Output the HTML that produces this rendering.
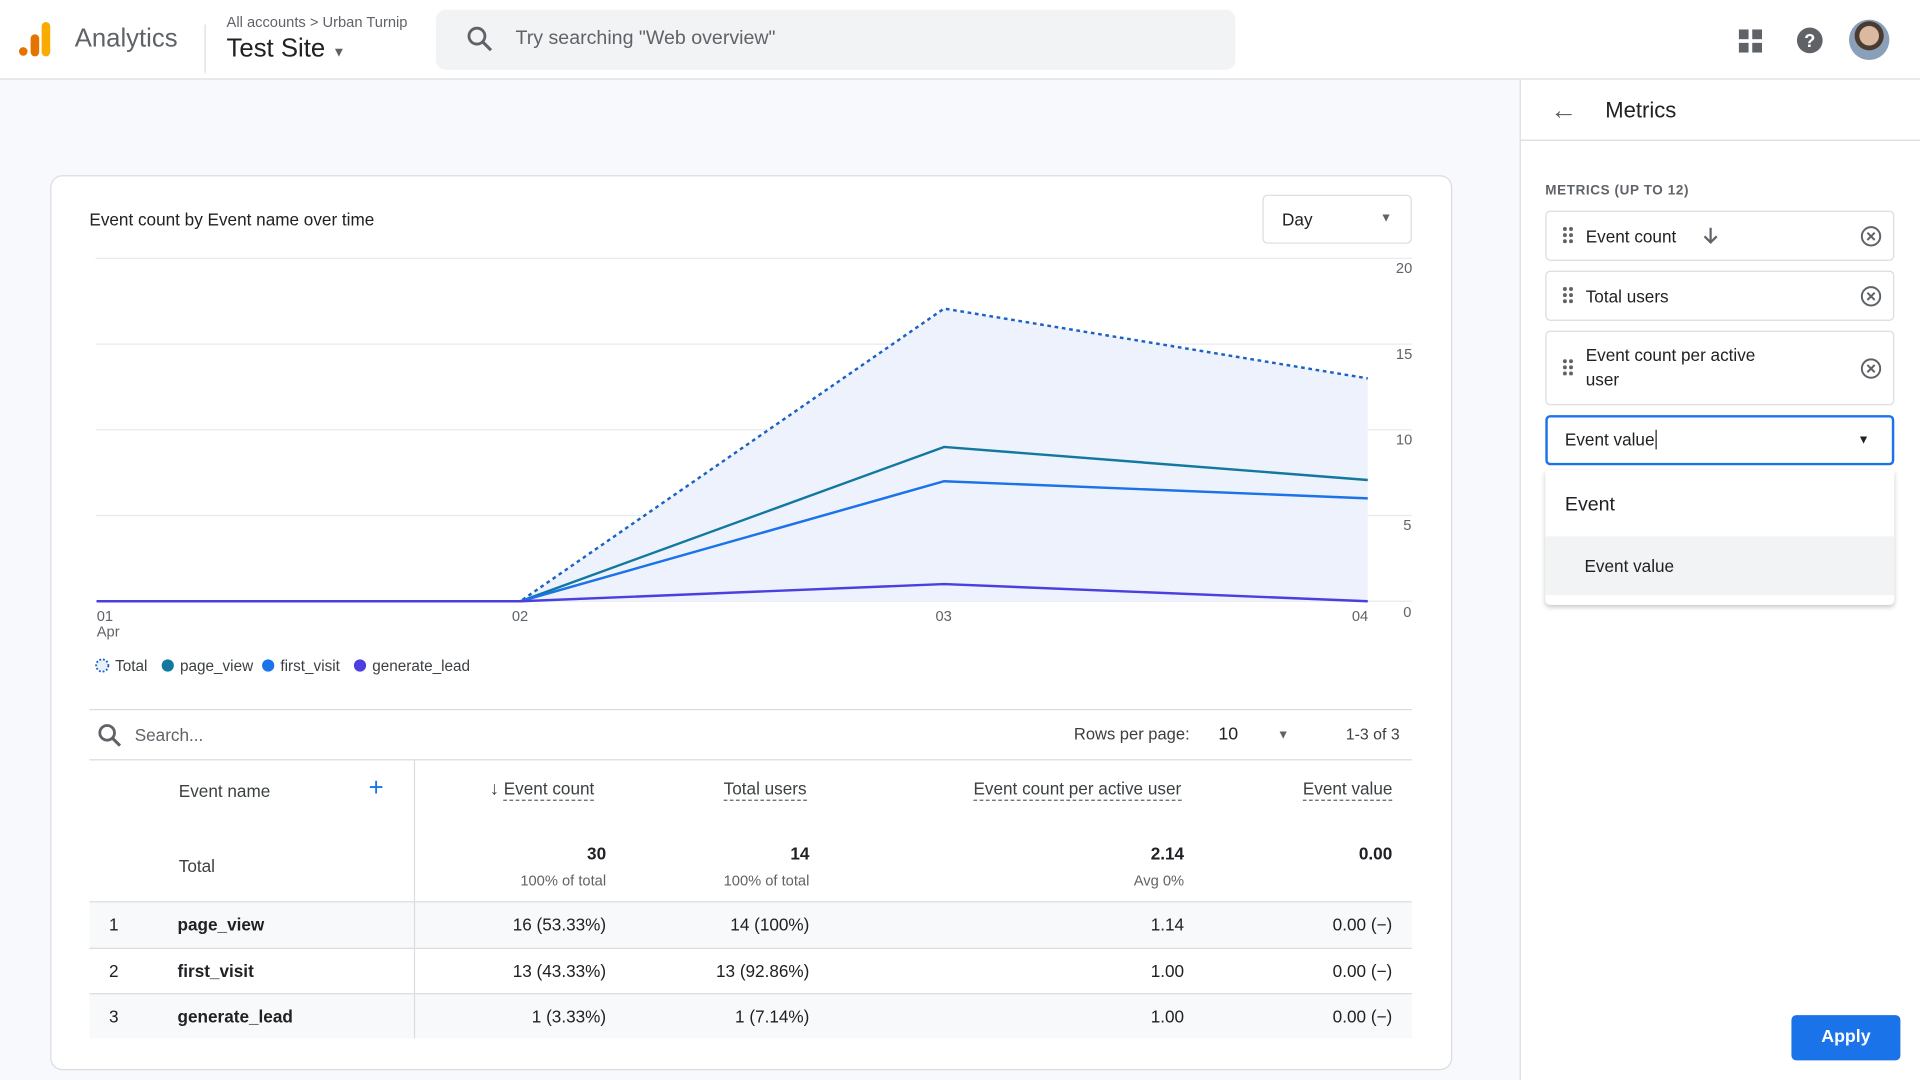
<!DOCTYPE html>
<html><head><meta charset="utf-8"><style>
*{box-sizing:border-box;margin:0;padding:0}
html,body{width:1920px;height:1080px;overflow:hidden;background:#fff;font-family:"Liberation Sans",Roboto,sans-serif;color:#202124}
#s{width:1568px;height:882px;transform:scale(1.22449);transform-origin:0 0;position:relative;background:#f8f9fc}
.a{position:absolute}
.top{left:0;top:0;width:1568px;height:65px;background:#fff;border-bottom:1px solid #dadce0}
.card{left:41px;top:143px;width:1145px;height:731px;background:#fff;border:1px solid #dadce0;border-radius:10px}
.t{font-size:14px;color:#3c4043}
.num{text-align:right}
.ul{border-bottom:1px dashed #5f6368;padding-bottom:1px}
</style></head><body><div id="s">
<div class="a top">
  <svg class="a" style="left:15px;top:17px" width="28" height="30"><circle cx="4" cy="25" r="3.5" fill="#e37400"/><rect x="10" y="11" width="7" height="18" rx="3.5" fill="#e37400"/><rect x="19" y="1" width="7" height="28" rx="3.5" fill="#f9ab00"/></svg>
  <div class="a" style="left:61px;top:20px;font-size:21px;color:#5f6368">Analytics</div>
  <div class="a" style="left:167px;top:20px;width:1px;height:40px;background:#dadce0"></div>
  <div class="a" style="left:185px;top:11px;font-size:12px;color:#5f6368">All accounts &gt; Urban Turnip</div>
  <div class="a" style="left:185px;top:28px;font-size:21px;color:#202124">Test Site <span style="font-size:11px;color:#5f6368">▼</span></div>
  <div class="a" style="left:356px;top:8px;width:653px;height:49px;background:#f1f3f4;border-radius:8px"></div>
  <svg class="a" style="left:381px;top:21px" width="22" height="22"><circle cx="8.5" cy="8.5" r="6.5" stroke="#5f6368" stroke-width="2.3" fill="none"/><line x1="13.5" y1="13.5" x2="20" y2="20" stroke="#5f6368" stroke-width="2.5"/></svg>
  <div class="a" style="left:421px;top:23px;font-size:16px;color:#5f6368">Try searching "Web overview"</div>
  <svg class="a" style="left:1420px;top:24px" width="19" height="19" fill="#5f6368"><rect x="0" y="0" width="8" height="8"/><rect x="11" y="0" width="8" height="8"/><rect x="0" y="11" width="8" height="8"/><rect x="11" y="11" width="8" height="8"/></svg>
  <svg class="a" style="left:1467px;top:22px" width="22" height="22"><circle cx="11" cy="11" r="10.5" fill="#5f6368"/><text x="11" y="16.5" font-size="15" font-weight="bold" fill="#fff" text-anchor="middle" font-family="Liberation Sans">?</text></svg>
  <div class="a" style="left:1510px;top:16px;width:33px;height:33px;border-radius:50%;background:radial-gradient(circle at 50% 40%,#d9b9a0 0 30%,#4a3a30 32% 45%,#8aa0b8 47%)"></div>
</div>

<div class="a card"></div>
<div class="a" style="left:73px;top:171px;font-size:14px;color:#202124">Event count by Event name over time</div>
<div class="a" style="left:1031px;top:159px;width:122px;height:40px;border:1px solid #dadce0;border-radius:4px"><span class="a" style="left:15px;top:11px;font-size:14px">Day</span><span class="a" style="left:95px;top:13px;font-size:10px;color:#5f6368">▼</span></div>
<svg class="a" style="left:0;top:0" width="1568" height="882" font-family="Liberation Sans" font-size="12" fill="#5f6368">
  <g stroke="#e8eaed"><line x1="78" y1="211" x2="1153" y2="211"/><line x1="78" y1="281" x2="1153" y2="281"/><line x1="78" y1="351" x2="1153" y2="351"/><line x1="78" y1="421" x2="1153" y2="421"/><line x1="78" y1="491" x2="1153" y2="491"/></g>
  <polygon points="79,491 425,491 771,252 1117,309 1117,491" fill="#eef2fc"/>
  <polyline points="79,491 425,491 771,252 1117,309" fill="none" stroke="#1a62c4" stroke-width="2" stroke-dasharray="3,3"/>
  <polyline points="79,491 425,491 771,365 1117,392" fill="none" stroke="#12799e" stroke-width="2"/>
  <polyline points="79,491 425,491 771,393 1117,407" fill="none" stroke="#1a73e8" stroke-width="2"/>
  <polyline points="79,491 425,491 771,477 1117,491" fill="none" stroke="#4b3fe0" stroke-width="2"/>
  <text x="1140" y="223">20</text><text x="1140" y="293">15</text><text x="1140" y="363">10</text><text x="1146" y="433">5</text><text x="1146" y="504">0</text>
  <text x="79" y="507">01</text><text x="79" y="520">Apr</text><text x="418" y="507">02</text><text x="764" y="507">03</text><text x="1104" y="507">04</text>
  <circle cx="83.5" cy="543.5" r="5" fill="#e8f0fe" stroke="#1a62c4" stroke-width="1.5" stroke-dasharray="1.5,1.5"/>
  <circle cx="137" cy="543.5" r="5" fill="#12799e"/><circle cx="219" cy="543.5" r="5" fill="#1a73e8"/><circle cx="294" cy="543.5" r="5" fill="#4b3fe0"/>
  <g fill="#3c4043" font-size="12.5"><text x="94" y="548">Total</text><text x="147" y="548">page_view</text><text x="229" y="548">first_visit</text><text x="304" y="548">generate_lead</text></g>
</svg>
<div class="a" style="left:73px;top:579px;width:1080px;height:1px;background:#dadce0"></div>
<svg class="a" style="left:79px;top:590px" width="22" height="22"><circle cx="8.5" cy="8.5" r="6" stroke="#5f6368" stroke-width="2.3" fill="none"/><line x1="13" y1="13" x2="19" y2="19" stroke="#5f6368" stroke-width="2.5"/></svg>
<div class="a" style="left:110px;top:592px;font-size:14px;color:#5f6368">Search...</div>
<div class="a" style="left:877px;top:592px;font-size:13.5px;color:#3c4043">Rows per page:</div>
<div class="a" style="left:995px;top:592px;font-size:14.5px">10</div>
<div class="a" style="left:1043px;top:595px;font-size:10px;color:#5f6368">▼</div>
<div class="a" style="left:1099px;top:592px;font-size:13px;color:#3c4043">1-3 of 3</div>
<div class="a" style="left:73px;top:620px;width:1080px;height:1px;background:#dadce0"></div>
<div class="a" style="left:73px;top:736px;width:1080px;height:38px;background:#f8f9fa;border-top:1px solid #dadce0"></div>
<div class="a" style="left:73px;top:774px;width:1080px;height:1px;background:#dadce0"></div>
<div class="a" style="left:73px;top:811px;width:1080px;height:37px;background:#f8f9fa;border-top:1px solid #dadce0"></div>
<div class="a" style="left:338px;top:621px;width:1px;height:227px;background:#dadce0"></div>
<div class="a" style="left:146px;top:638px;font-size:14px;color:#3c4043">Event name</div>
<div class="a" style="left:301px;top:632px;font-size:21px;color:#1a73e8">+</div>
<div class="a t" style="left:400px;top:636px"><span style="font-size:15px">↓</span> <span class="ul">Event count</span></div>
<div class="a t" style="left:591px;top:636px"><span class="ul">Total users</span></div>
<div class="a t" style="left:795px;top:636px"><span class="ul">Event count per active user</span></div>
<div class="a t" style="left:1064px;top:636px"><span class="ul">Event value</span></div>
<div class="a t" style="left:146px;top:699px">Total</div>
<div class="a" style="left:395px;top:689px;width:100px;font-size:14px;font-weight:bold"><div style="text-align:right">30</div><div style="text-align:right;font-size:12px;font-weight:normal;color:#5f6368;margin-top:7px">100% of total</div></div>
<div class="a" style="left:561px;top:689px;width:100px;font-size:14px;font-weight:bold"><div style="text-align:right">14</div><div style="text-align:right;font-size:12px;font-weight:normal;color:#5f6368;margin-top:7px">100% of total</div></div>
<div class="a" style="left:867px;top:689px;width:100px;font-size:14px;font-weight:bold"><div style="text-align:right">2.14</div><div style="text-align:right;font-size:12px;font-weight:normal;color:#5f6368;margin-top:7px">Avg 0%</div></div>
<div class="a" style="left:1037px;top:689px;width:100px;font-size:14px;font-weight:bold;text-align:right">0.00</div>
<div class="a" style="left:0;top:747px;width:1200px;font-size:14px">
 <span class="a" style="left:89px">1</span><span class="a" style="left:145px;font-weight:bold">page_view</span><span class="a num" style="left:395px;width:100px">16 (53.33%)</span><span class="a num" style="left:561px;width:100px">14 (100%)</span><span class="a num" style="left:867px;width:100px">1.14</span><span class="a num" style="left:1017px;width:120px">0.00 (−)</span></div>
<div class="a" style="left:0;top:785px;width:1200px;font-size:14px">
 <span class="a" style="left:89px">2</span><span class="a" style="left:145px;font-weight:bold">first_visit</span><span class="a num" style="left:395px;width:100px">13 (43.33%)</span><span class="a num" style="left:561px;width:100px">13 (92.86%)</span><span class="a num" style="left:867px;width:100px">1.00</span><span class="a num" style="left:1017px;width:120px">0.00 (−)</span></div>
<div class="a" style="left:0;top:822px;width:1200px;font-size:14px">
 <span class="a" style="left:89px">3</span><span class="a" style="left:145px;font-weight:bold">generate_lead</span><span class="a num" style="left:395px;width:100px">1 (3.33%)</span><span class="a num" style="left:561px;width:100px">1 (7.14%)</span><span class="a num" style="left:867px;width:100px">1.00</span><span class="a num" style="left:1017px;width:120px">0.00 (−)</span></div>

<!-- side panel -->
<div class="a" style="left:1241px;top:65px;width:327px;height:817px;background:#fff;border-left:1px solid #dadce0"></div>
<div class="a" style="left:1266px;top:77px;font-size:22px;color:#5f6368">←</div>
<div class="a" style="left:1311px;top:80px;font-size:18px;color:#202124">Metrics</div>
<div class="a" style="left:1241px;top:114px;width:327px;height:1px;background:#dadce0"></div>
<div class="a" style="left:1262px;top:150px;font-size:11px;letter-spacing:.5px;color:#5f6368;font-weight:bold">METRICS (UP TO 12)</div>
<div class="a" style="left:1262px;top:172px;width:285px;height:41px;border:1px solid #dadce0;border-radius:4px"></div>
<div class="a" style="left:1262px;top:221px;width:285px;height:41px;border:1px solid #dadce0;border-radius:4px"></div>
<div class="a" style="left:1262px;top:270px;width:285px;height:61px;border:1px solid #dadce0;border-radius:4px"></div>
<svg class="a" style="left:0;top:0" width="1568" height="882">
 <g fill="#5f6368"><circle cx="1278" cy="187" r="1.6"/><circle cx="1283" cy="187" r="1.6"/><circle cx="1278" cy="192" r="1.6"/><circle cx="1283" cy="192" r="1.6"/><circle cx="1278" cy="197" r="1.6"/><circle cx="1283" cy="197" r="1.6"/>
 <circle cx="1278" cy="236" r="1.6"/><circle cx="1283" cy="236" r="1.6"/><circle cx="1278" cy="241" r="1.6"/><circle cx="1283" cy="241" r="1.6"/><circle cx="1278" cy="246" r="1.6"/><circle cx="1283" cy="246" r="1.6"/>
 <circle cx="1278" cy="295" r="1.6"/><circle cx="1283" cy="295" r="1.6"/><circle cx="1278" cy="300" r="1.6"/><circle cx="1283" cy="300" r="1.6"/><circle cx="1278" cy="305" r="1.6"/><circle cx="1283" cy="305" r="1.6"/></g>
 <g stroke="#5f6368" stroke-width="1.6" fill="none"><circle cx="1528" cy="193" r="7.5"/><path d="M1525 190l6 6M1531 190l-6 6"/><circle cx="1528" cy="242" r="7.5"/><path d="M1525 239l6 6M1531 239l-6 6"/><circle cx="1528" cy="301" r="7.5"/><path d="M1525 298l6 6M1531 298l-6 6"/>
 <path d="M1397 186v12M1392 193l5 5 5-5" stroke-width="1.8"/></g>
</svg>
<div class="a" style="left:1295px;top:185px;font-size:14px">Event count</div>
<div class="a" style="left:1295px;top:234px;font-size:14px">Total users</div>
<div class="a" style="left:1295px;top:280px;font-size:14px;line-height:20px;width:160px">Event count per active user</div>
<div class="a" style="left:1262px;top:339px;width:285px;height:41px;border:2px solid #1a73e8;border-radius:4px"></div>
<div class="a" style="left:1278px;top:351px;font-size:14px">Event value<span style="border-left:1px solid #202124;margin-left:1px"></span></div>
<div class="a" style="left:1517px;top:354px;font-size:10px;color:#202124">▼</div>
<div class="a" style="left:1262px;top:384px;width:285px;height:110px;background:#fff;box-shadow:0 2px 4px rgba(0,0,0,.2);border-radius:0 0 4px 4px"></div>
<div class="a" style="left:1262px;top:438px;width:285px;height:48px;background:#f1f3f4"></div>
<div class="a" style="left:1278px;top:404px;font-size:16px">Event</div>
<div class="a" style="left:1294px;top:454px;font-size:14px">Event value</div>
<div class="a" style="left:1463px;top:829px;width:89px;height:37px;background:#1a73e8;border-radius:4px;color:#fff;font-size:14.5px;font-weight:bold;text-align:center;line-height:37px">Apply</div>
</div></body></html>
